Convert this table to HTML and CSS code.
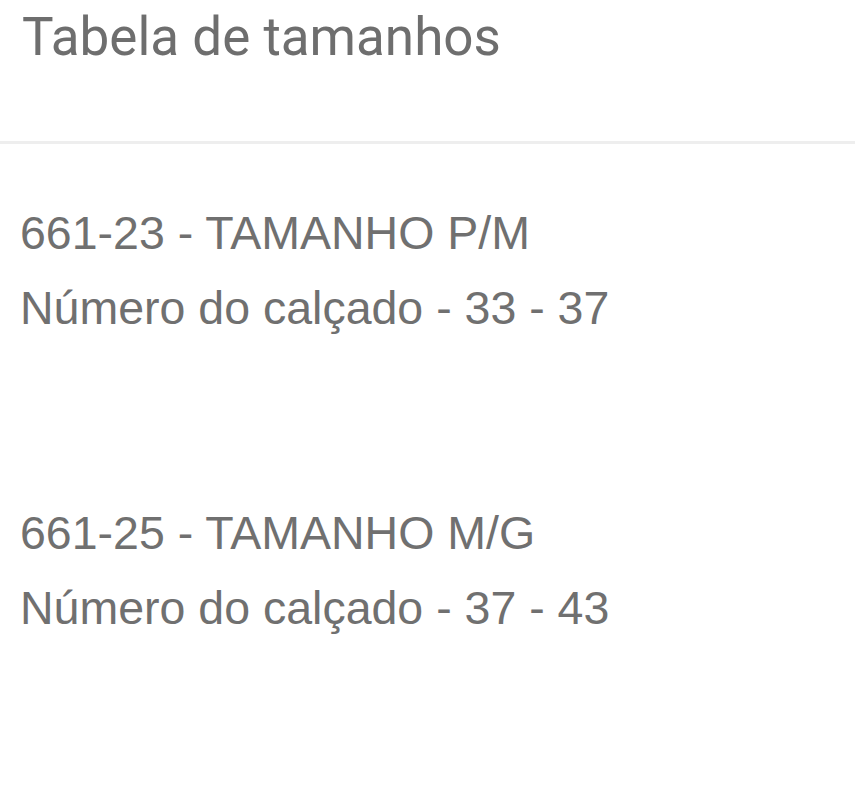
FILE: index.html
```html
<!DOCTYPE html>
<html lang="pt">

<head>
    <meta charset="utf-8">
    <meta name="viewport" content="width=device-width, initial-scale=1.0">
    <title>Tabela de tamanhos</title>
    <link rel="stylesheet" href="styles.css">
</head>

<body>
    <header class="topo">
        <h1>Tabela de tamanhos</h1>
    </header>

    <section class="tamanhos">
        <article class="tamanho">
            <p>661-23 - TAMANHO P/M</p>
            <p>Número do calçado - 33 - 37</p>
        </article>
        <article class="tamanho">
            <p>661-25 - TAMANHO M/G</p>
            <p>Número do calçado - 37 - 43</p>
        </article>
    </section>
</body>

</html>
```

FILE: styles.css
```css
body {
    margin: 0;
    background: #fff;
    color: #6b6b6b;
}

.topo {
    border-bottom: 3px solid #eeeeee;
    padding: 0 22px;
    height: 141px;
}

h1 {
    margin: 0;
    font-family: Roboto, sans-serif;
    font-weight: 400;
    font-size: 53px;
    line-height: 74px;
    color: #6e6e6e;
}

.tamanhos {
    padding: 0 20px;
}

.tamanho {
    padding: 52px 0 98px;
}

.tamanho p {
    margin: 0;
    font-family: "Liberation Sans", Arial, sans-serif;
    font-size: 46.5px;
    line-height: 75px;
    color: #707070;
}
```
